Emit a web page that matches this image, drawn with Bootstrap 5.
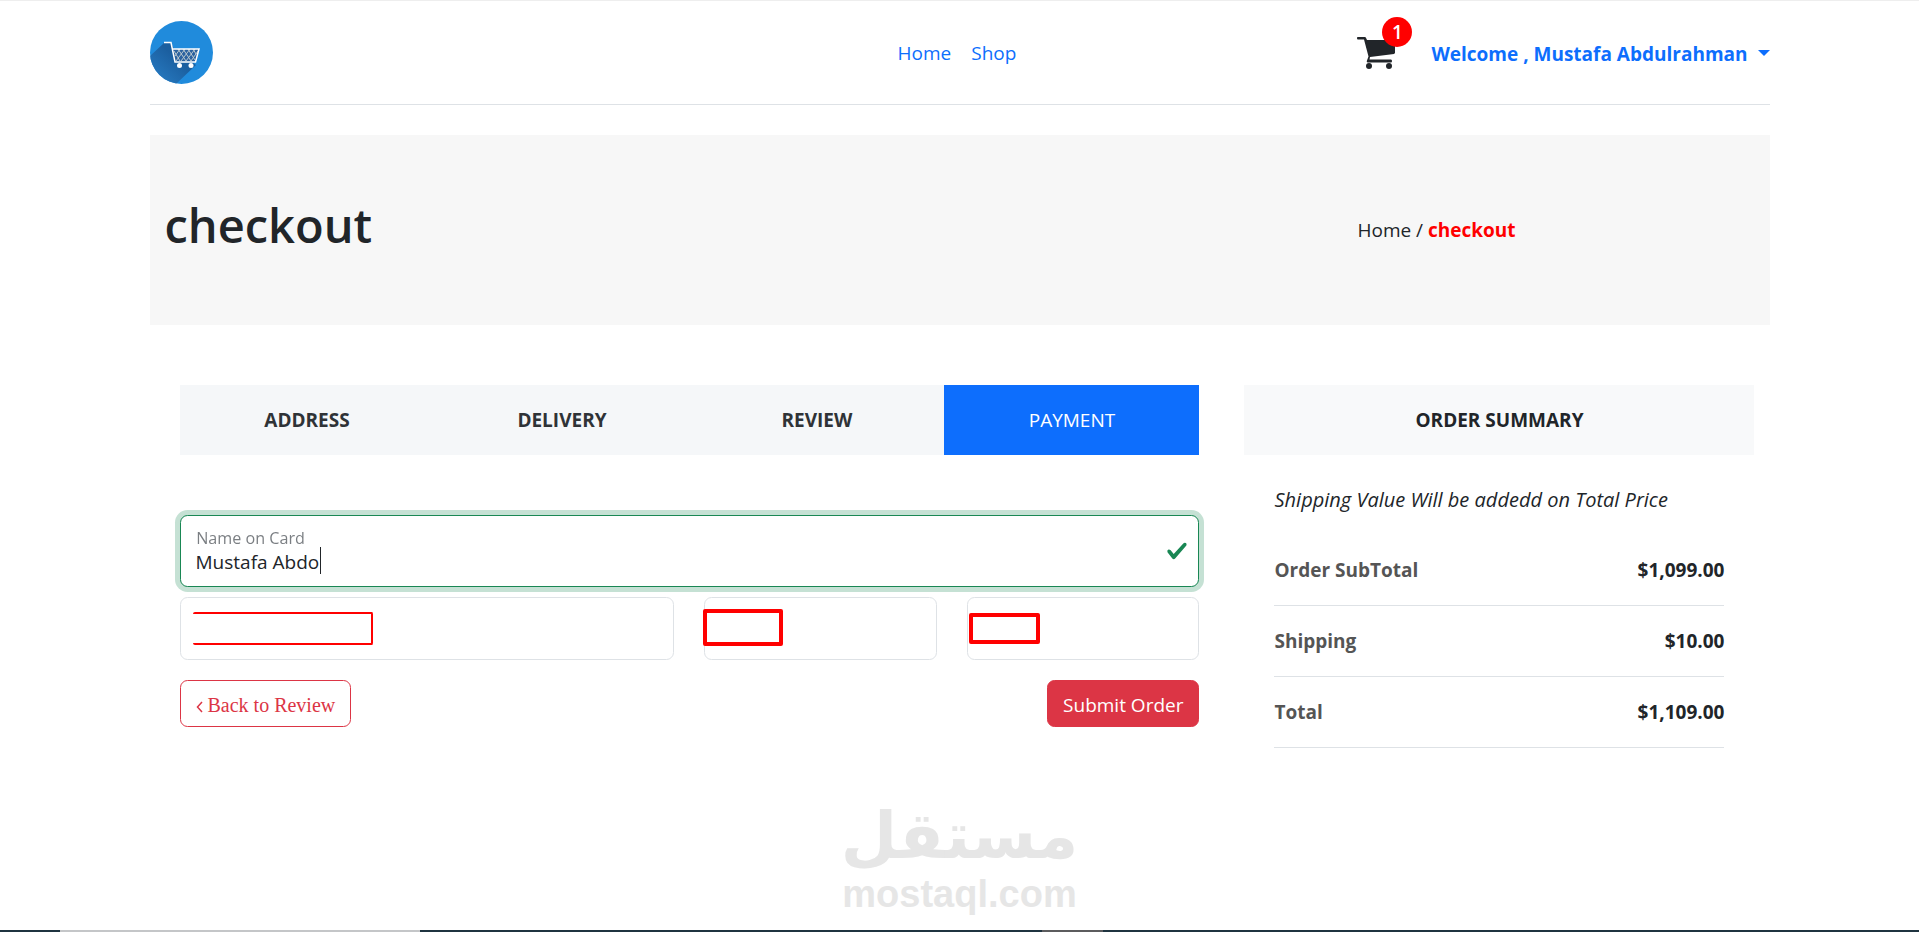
<!DOCTYPE html>
<html lang="en">
<head>
<meta charset="utf-8">
<meta name="viewport" content="width=device-width, initial-scale=1">
<title>Checkout</title>
<link rel="stylesheet" href="https://cdn.jsdelivr.net/npm/bootstrap@5.3.0/dist/css/bootstrap.min.css">
<style>
:root { font-size: 20px; }
body {
  --bs-body-font-family: "Open Sans", "Noto Sans", sans-serif;
  --bs-body-font-size: 19px;
  --bs-body-line-height: 30px;
  border-top: 1px solid #eee;
}
.shop-container { max-width: 1650px; }
.site-bar { border-bottom: 1px solid #dee2e6; height: 104px; }
.site-bar a, .crumbs a { text-decoration: none; }
.bold-text { font-weight: 700; font-size: 19px; line-height: 30px; }
.bar-side { flex: 1 1 0; }
.cart-link { position: relative; color: #212529; margin-right: 36px; }
.cart-count {
  position: absolute; top: -20px; right: -17px; width: 30px; height: 30px;
  background: #f00; color: #fff; border-radius: 50%; text-align: center;
  font-weight: 600;
}
.account-btn { color: #0d6efd; border: 0; background: none; padding: 3px 0 0; }
.account-btn::after { margin-left: 10px; vertical-align: 5px; border-width: 6px 6px 0; }
.hero-band { background: #f7f7f7; height: 190px; }
.hero-band h1 { font-size: 47px; font-weight: 600; line-height: 60px; }
.crumbs { padding-left: 128px; }
.crumbs strong { color: #f00; font-weight: 700; font-size: 19px; }
.step-link { background: #f5f7f9; color: #2f3337; font-weight: 700; font-size: 19px; text-decoration: none; }
.step-link.current { background: #0d6efd; color: #fff; font-weight: 400; }
.checkout-form { margin-top: 60px; }
.form-floating > .name-input, .form-floating > .name-input:focus { height: 72px; font-size: 19px; padding-top: 31px; padding-bottom: 9px; border-color: #198754; box-shadow: 0 0 0 5px rgba(25,135,84,.25); caret-color: transparent; }
.form-floating > label.name-label { padding-top: 21px; color: #343a40; }
.text-caret { position: absolute; left: 140px; top: 32px; width: 1px; height: 27px; background: #212529; }
.card-field { height: 63px; border-color: #dee2e6; }
.redact { position: absolute; border: 4px solid #f00; border-radius: 2px; }
.redact-number { border-width: 2px; border-left: 0; left: 28px; top: 15px; width: 180px; height: 33px; }
.redact-expiry { left: 14px; top: 12px; width: 80px; height: 37px; }
.redact-code { left: 17px; top: 16px; width: 71px; height: 31px; }
.btn { font-size: 19px; padding: 9px 15px 6px; }
.back-btn { font-family: "Liberation Serif", serif; font-size: 20px; }
.summary-note { padding-top: 30px; font-size: 20px; }
.summary-table { --bs-table-bg: transparent; }
.summary-table th { color: #555; }
.summary-table th, .summary-table td { padding: 20px 0; font-weight: 700; font-size: 19px; }
.watermark { color: #e6e6e6; }
.watermark-ar { font: 700 65px/72px "DejaVu Sans", sans-serif; }
.watermark-en { font: 700 38px/44px "Liberation Sans", sans-serif; }
.taskbar {
  height: 2px; margin-top: 14px;
  background: linear-gradient(90deg, #1f3440 60px, #c4c6c8 60px 420px, #1f3440 420px 1042px, #5c5c5e 1042px 1103px, #1f3440 1103px);
}
</style>
</head>
<body class="d-flex flex-column min-vh-100">
<div class="container shop-container">
  <header class="site-bar d-flex align-items-center">
    <div class="bar-side">
      <a href="#" aria-label="Shop home">
        <svg width="63" height="63" viewBox="0 0 63 63" aria-hidden="true">
          <defs><clipPath id="disc"><circle cx="31.500" cy="31.500" r="31.500"/></clipPath>
          <linearGradient id="shade" x1="1" y1="0" x2="0" y2="1"><stop offset=".4" stop-color="#1b5fa0"/><stop offset="1" stop-color="#2a80c8"/></linearGradient></defs>
          <circle cx="31.500" cy="31.500" r="31.500" fill="#208bdc"/>
          <path d="M14 22L0 35V63H26L46 44L24 28L21 22Z" fill="url(#shade)" clip-path="url(#disc)"/>
          <path d="M23 28H49L45 41H25Z" fill="#2b62a0"/>
          <path d="M24 30L30 40M28 28L36 40M33 28L41 40M38 28L45 39M43 28L46 33M30 28L25 35M35 28L26 40M40 28L31 40M45 28L36 40M48 30L41 40" stroke="#b9c6cc" stroke-width="1" fill="none"/>
          <path d="M14 21.500H21L25 41H45.500L49 28H22" fill="none" stroke="#fff" stroke-width="1.500"/>
          <circle cx="29.500" cy="44.500" r="2.500" fill="#fff"/><circle cx="41" cy="44.500" r="2.500" fill="#fff"/>
        </svg>
      </a>
    </div>
    <nav class="d-flex gap-3 pe-1" aria-label="Main">
      <a href="#">Home</a>
      <a href="#">Shop</a>
    </nav>
    <div class="bar-side d-flex justify-content-end align-items-center">
      <a href="#" class="cart-link d-flex" aria-label="Cart">
        <svg width="38" height="32" viewBox="0 0 38 32" fill="currentColor" aria-hidden="true">
          <path d="M1 0H8Q9 0 9.300 1.500L10 3H38V16L37 17L13 20L12.500 22.500H34Q35 22.500 35 24T34 25.500H11Q9.500 25.500 9.800 24L11.500 19.500L7 2.500H1Q0 2.500 0 1.200T1 0Z"/>
          <circle cx="12" cy="29" r="3"/><circle cx="32" cy="29" r="3"/>
        </svg>
        <span class="cart-count">1</span>
      </a>
      <button type="button" class="account-btn dropdown-toggle bold-text" data-bs-toggle="dropdown" aria-expanded="false">Welcome , Mustafa Abdulrahman</button>
      <ul class="dropdown-menu"><li><a class="dropdown-item" href="#">Logout</a></li></ul>
    </div>
  </header>

  <section class="hero-band row mx-0 mt-4 align-items-center">
    <div class="col-8"><h1 class="mb-2">checkout</h1></div>
    <div class="col-4 crumbs"><a href="#" class="text-dark">Home</a> / <strong>checkout</strong></div>
  </section>

  <main class="row mx-0 pt-5">
    <section class="col-8 px-4">
      <nav class="row g-0 text-center" aria-label="Checkout steps">
        <a href="#" class="col-3 step-link py-3">ADDRESS</a>
        <a href="#" class="col-3 step-link py-3">DELIVERY</a>
        <a href="#" class="col-3 step-link py-3">REVIEW</a>
        <a href="#" class="col-3 step-link current py-3" aria-current="step">PAYMENT</a>
      </nav>
      <form class="checkout-form">
        <div class="form-floating mb-2">
          <input type="text" class="form-control is-valid name-input" id="cardName" value="Mustafa Abdo" placeholder="Name on Card" autofocus>
          <label for="cardName" class="name-label">Name on Card</label>
          <span class="text-caret"></span>
        </div>
        <div class="row">
          <div class="col-6 position-relative"><input type="text" class="form-control card-field" aria-label="Card number"><span class="redact redact-number"></span></div>
          <div class="col-3 position-relative"><input type="text" class="form-control card-field" aria-label="Expiry date"><span class="redact redact-expiry"></span></div>
          <div class="col-3 position-relative"><input type="text" class="form-control card-field" aria-label="Security code"><span class="redact redact-code"></span></div>
        </div>
        <div class="d-flex justify-content-between mt-3">
          <button type="button" class="btn btn-outline-danger back-btn"><svg width="7" height="12" viewBox="0 0 7 12" fill="none" stroke="currentColor" stroke-width="1.500" aria-hidden="true"><path d="M6 1L1.500 6L6 11"/></svg> Back to Review</button>
          <button type="submit" class="btn btn-danger">Submit Order</button>
        </div>
      </form>
    </section>
    <aside class="col-4">
      <h2 class="bold-text bg-light text-center m-0 py-3">ORDER SUMMARY</h2>
      <div class="px-4">
        <p class="fst-italic summary-note">Shipping Value Will be addedd on Total Price</p>
        <table class="table summary-table">
          <tbody>
            <tr><th scope="row">Order SubTotal</th><td class="text-end">$1,099.00</td></tr>
            <tr><th scope="row">Shipping</th><td class="text-end">$10.00</td></tr>
            <tr><th scope="row">Total</th><td class="text-end">$1,109.00</td></tr>
          </tbody>
        </table>
      </div>
    </aside>
  </main>
</div>
<footer class="mt-auto">
  <div class="watermark text-center">
    <div class="watermark-ar" lang="ar" dir="rtl">مستقل</div>
    <div class="watermark-en">mostaql.com</div>
  </div>
  <div class="taskbar"></div>
</footer>
<script src="https://cdn.jsdelivr.net/npm/bootstrap@5.3.0/dist/js/bootstrap.bundle.min.js"></script>
</body>
</html>
